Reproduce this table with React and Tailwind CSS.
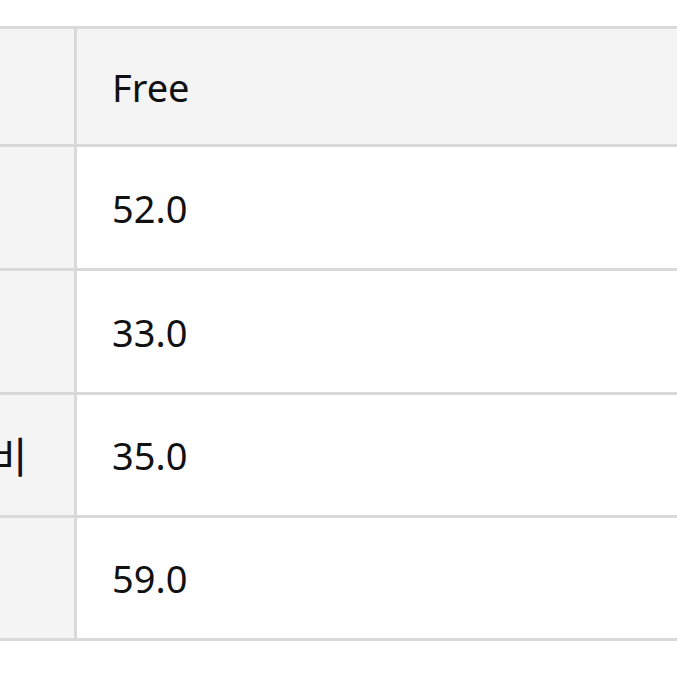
import React from 'react';

const rows = [
  { label: '가슴', value: '52.0', h: 'h-[124px]' },
  { label: '어깨', value: '33.0', h: 'h-[124px]' },
  { label: '밑단너비', value: '35.0', h: 'h-[123px]' },
  { label: '총장', value: '59.0', h: 'h-[123px]' },
];

function App() {
  return (
    <div className="w-[677px] h-[677px] overflow-hidden bg-white pt-[26px] font-['Noto_Sans','Noto_Sans_CJK_KR',sans-serif] text-[#111]">
      <div className="w-[847px] ml-[-170px] border-t-[3px] border-[#d9d9d9]">
        <div className="grid grid-cols-[247px_1fr] h-[118px] border-b-[3px] border-[#d9d9d9] bg-[#f4f4f4]">
          <div className="border-r-[3px] border-[#d9d9d9]" />
          <div className="flex items-center pl-[35px] text-[38px] leading-none">Free</div>
        </div>
        {rows.map((r) => (
          <div key={r.value} className={`grid grid-cols-[247px_1fr] ${r.h} border-b-[3px] border-[#d9d9d9]`}>
            <div className="flex items-center justify-center pr-[4px] bg-[#f4f4f4] border-r-[3px] border-[#d9d9d9] text-[42px] leading-none font-['Noto_Sans_CJK_KR',sans-serif]">
              {r.label}
            </div>
            <div className="flex items-center pl-[35px] bg-white text-[38px] leading-none">{r.value}</div>
          </div>
        ))}
      </div>
    </div>
  );
}

export default App;
